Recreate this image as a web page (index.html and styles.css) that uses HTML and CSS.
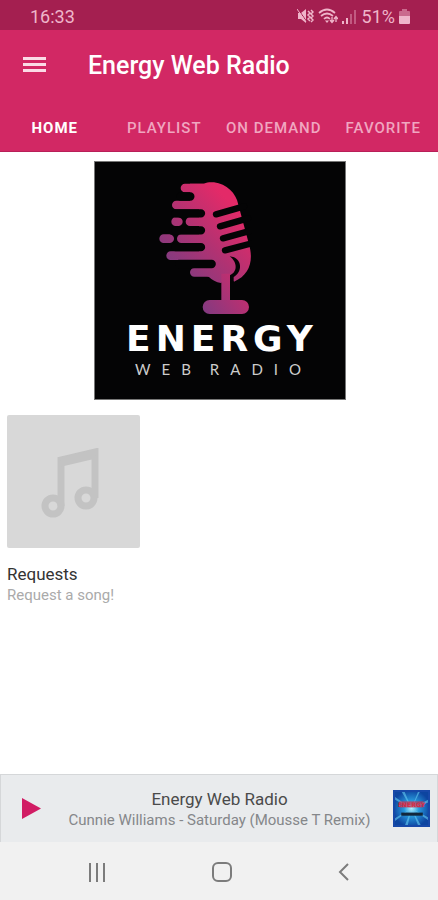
FILE: index.html
```html
<!DOCTYPE html>
<html lang="en">
<head>
  <meta charset="UTF-8">
  <meta name="viewport" content="width=device-width, initial-scale=1.0">
  <title>Energy Web Radio</title>
  <link rel="stylesheet" href="styles.css">
</head>
<body>
  <div class="status">
    <span>16:33</span>
    <div class="status-icons">
      <svg width="17" height="16" viewBox="0 0 17 16" fill="currentColor">
        <path d="M1 5h3l5-4v14l-5-4H1z"/>
        <path d="M1 1l9 13" stroke="#a41f50" stroke-width="1"/>
        <path d="M0 1l9 13" stroke="currentColor" stroke-width="1"/>
        <path d="M11 3l2 2-2 2 2 2-2 2 2 2M14 2l2 2-2 2 2 2-2 2 2 2-2 2" fill="none" stroke="currentColor" stroke-width="1.5"/>
      </svg>
      <svg width="20" height="16" viewBox="0 0 20 16" fill="none" stroke="currentColor" stroke-width="1.7">
        <path d="M1 5q8-7 16 0M3 8q6-5 12 0M6 11q3-3 6 0"/>
        <path d="M7 12.500h4L9 15z" fill="currentColor" stroke="none"/>
        <path d="M14 9v5M12 12l2 2.500 2-2.500M18 14V9M16 11l2-2.500 2 2.500" stroke-width="1.300"/>
      </svg>
      <svg width="14" height="15" viewBox="0 0 14 15" fill="currentColor">
        <path d="M0 12h2v3H0zM4 9h2v6H4z"/>
        <path d="M8 5h2v10H8zM12 1h2v14h-2z" opacity=".4"/>
      </svg>
      <span class="battery-level">51%</span>
      <svg width="11" height="15" viewBox="0 0 11 15" fill="currentColor">
        <path d="M3 0h5v2h2q1 0 1 1v4H0V3q0-1 1-1h2z" opacity=".5"/>
        <path d="M0 7h11v7q0 1-1 1H1q-1 0-1-1z"/>
      </svg>
    </div>
  </div>

  <header>
    <div class="toolbar">
      <button class="menu" aria-label="Menu">
        <svg width="23" height="16" viewBox="0 0 23 16" fill="currentColor">
          <path d="M0 0h23v3H0zM0 6h23v3H0zM0 12h23v3H0z"/>
        </svg>
      </button>
      <h1>Energy Web Radio</h1>
    </div>
    <nav class="tabs">
      <a class="active" href="#home">HOME</a>
      <a href="#playlist">PLAYLIST</a>
      <a href="#demand">ON DEMAND</a>
      <a href="#favorite">FAVORITE</a>
    </nav>
  </header>

  <main>
    <section class="banner">
      <svg class="mic" width="93" height="133" viewBox="30 20 279 399">
        <defs>
          <linearGradient id="mic" gradientUnits="userSpaceOnUse" x1="270" y1="110" x2="80" y2="290">
            <stop offset="0" stop-color="#e32a68"/>
            <stop offset=".5" stop-color="#b23272"/>
            <stop offset="1" stop-color="#823b80"/>
          </linearGradient>
          <linearGradient id="stand" gradientUnits="userSpaceOnUse" x1="300" y1="300" x2="160" y2="400">
            <stop offset="0" stop-color="#d32b6a"/>
            <stop offset="1" stop-color="#843a80"/>
          </linearGradient>
        </defs>
        <!-- body -->
        <path fill="url(#mic)" d="M123 25h42c10-5 20-5 30-4 38 5 66 32 73 67l32 119c14 48 3 92-45 112l-12-14-27 18c-15-3-27-9-37-19l-29-13V102h-27z"/>
        <g stroke="url(#mic)" stroke-width="26" stroke-linecap="round" fill="none">
          <path d="M108 38h60l1 .1M82 89h90l1 .1M80 139h7l1 .1M123 139h50l1 .1M44 190h17l1 .1M97 190h70l1 .1M65 241h120l1 .1M136 291h50l1 .1"/>
        </g>
        <!-- gaps on both sides -->
        <g stroke="#040405" stroke-width="25" stroke-linecap="round" fill="none">
          <path d="M95 63.500h29M80 114h76M80 165h76M80 215.500h76M90 266h98"/>
          <path stroke-width="19" d="M201 117l84-24M213 153l84-24M222 189l84-23M228 225l84-22"/>
        </g>
        <path fill="url(#stand)" d="M217 295h26v79h36a21 21 0 0 1 0 42h-97a21 21 0 0 1 0-42h35z"/>
        <path fill="#040405" d="M242 243c40 4 39 49 12 62v17h-11v-22c21-9 25-37-1-57z"/>
      </svg>
      <h2>ENERGY</h2>
      <p><span>WEB</span> <span>RADIO</span></p>
    </section>

    <section class="list">
      <a class="card" href="#requests">
        <span class="cover">
          <svg width="60" height="72" viewBox="0 0 60 72" fill="none" stroke="#c3c3c3" stroke-width="7">
            <circle cx="12" cy="58" r="8"/>
            <circle cx="45" cy="50" r="8"/>
            <path d="M20 58V12l34-8v46"/>
            <path d="M20 14l34-8" stroke-width="9"/>
          </svg>
        </span>
        <span class="title">Requests</span>
        <span class="text">Request a song!</span>
      </a>
    </section>
  </main>

  <footer>
    <div class="player">
      <button class="play" aria-label="Play">
        <svg width="19" height="21" viewBox="0 0 19 21"><path d="M0 0l19 10.500L0 21z" fill="#d11c64"/></svg>
      </button>
      <div class="track">
        <span class="station">Energy Web Radio</span>
        <span class="song">Cunnie Williams - Saturday (Mousse T Remix)</span>
      </div>
      <div class="art">
        <svg width="37" height="37" viewBox="0 0 36 36">
          <defs>
            <radialGradient id="glow">
              <stop offset="0" stop-color="#b9f3ff"/>
              <stop offset=".4" stop-color="#2899dc"/>
              <stop offset="1" stop-color="#0d45a0"/>
            </radialGradient>
          </defs>
          <path fill="url(#glow)" d="M0 0h36v36H0z"/>
          <path fill="#66cdf2" opacity=".6" d="M18 18L8 1h3zM18 18L25 0h2zM18 18L1 6v3zM18 18l17-9v3zM18 18L1 28v3zM18 18l-7 18h3zM18 18l7 18h3zM18 18l17 9v3z"/>
          <path fill="none" stroke="#1748a8" stroke-width="2" d="M1 1h34v34H1z"/>
          <path fill="#d52b45" opacity=".6" d="M6 11h24l-1 6H7z"/>
          <text class="art-name" x="18" y="17" text-anchor="middle">ENERGY</text>
          <path fill="#12283c" d="M8 22h21v3H8z"/>
        </svg>
      </div>
    </div>
    <div class="system">
      <button aria-label="Recent apps">
        <svg width="18" height="19" viewBox="0 0 18 19" fill="none" stroke="currentColor" stroke-width="2"><path d="M2 0v19M9 0v19M16 0v19"/></svg>
      </button>
      <button aria-label="Home">
        <svg width="20" height="20" viewBox="0 0 20 20" fill="none" stroke="currentColor" stroke-width="2"><rect x="1" y="1" width="18" height="18" rx="5"/></svg>
      </button>
      <button aria-label="Back">
        <svg width="11" height="18" viewBox="0 0 11 18" fill="none" stroke="currentColor" stroke-width="2"><path d="M10 1L2 9l8 8"/></svg>
      </button>
    </div>
  </footer>
</body>
</html>
```
FILE: styles.css
```css
* {
  box-sizing: border-box;
}

body {
  display: flex;
  flex-direction: column;
  min-height: 100vh;
  margin: 0;
  background: #fff;
  font-family: Roboto, sans-serif;
}

h1, h2, p {
  margin: 0;
}

a {
  color: inherit;
  text-decoration: none;
}

button {
  display: flex;
  align-items: center;
  justify-content: center;
  padding: 0;
  border: 0;
  background: none;
  color: inherit;
}

.status {
  display: flex;
  align-items: center;
  justify-content: space-between;
  height: 30px;
  padding: 2px 28px 0 30px;
  background: #a41f50;
  color: #efb5ca;
  font-size: 18px;
}

.status-icons {
  display: flex;
  align-items: center;
  gap: 4px;
}

.battery-level {
  padding-left: 2px;
}

header {
  background: #d22864;
  color: #fff;
}

.toolbar {
  display: flex;
  align-items: center;
  gap: 42px;
  height: 70px;
  padding: 0 23px;
}

.menu {
  color: #fbdbe6;
}

h1 {
  font-size: 25px;
  font-weight: 500;
}

.tabs {
  display: grid;
  grid-template-columns: repeat(4, 1fr);
  height: 52px;
  border-bottom: 1px solid #b81f58;
}

.tabs a {
  display: flex;
  align-items: center;
  justify-content: center;
  padding-top: 4px;
  color: #f0a6c0;
  font-size: 15px;
  font-weight: 500;
  letter-spacing: 1px;
  white-space: nowrap;
}

.tabs .active {
  color: #fff;
  font-weight: 700;
}

main {
  flex: 1;
  padding: 9px 6px 9px 7px;
}

.banner {
  display: flex;
  flex-direction: column;
  align-items: center;
  width: 252px;
  margin: 0 auto 15px;
  padding: 20px 0;
  border: 1px solid #777;
  background: #040405;
  color: #fff;
}

.mic {
  margin-right: 28px;
}

.banner h2 {
  padding: 4px 0 0 5px;
  font: bold 36px/40px "DejaVu Sans", sans-serif;
  letter-spacing: 5px;
}

.banner p {
  display: flex;
  gap: 8px;
  padding-left: 8px;
  color: #ccc;
  font: 15px/20px Lato, sans-serif;
  letter-spacing: 11px;
}

.card {
  display: flex;
  flex-direction: column;
  width: 133px;
}

.cover {
  display: flex;
  align-items: center;
  justify-content: center;
  aspect-ratio: 1;
  margin-bottom: 16px;
  padding: 4px 6px 0 0;
  border-radius: 2px;
  background: #d8d8d8;
}

.title {
  color: #333;
  font-size: 17px;
  line-height: 20px;
}

.text {
  color: #aaa;
  font-size: 15px;
  line-height: 22px;
}

.player {
  display: flex;
  align-items: center;
  height: 68px;
  padding: 0 7px 0 21px;
  border: 1px solid #d5d7d9;
  border-bottom: 0;
  background: #e9ebed;
}

.track {
  flex: 1;
  display: flex;
  flex-direction: column;
  padding-left: 5px;
  text-align: center;
}

.station {
  color: #4a4a4a;
  font-size: 17px;
  line-height: 22px;
}

.song {
  color: #85878a;
  font-size: 15px;
  line-height: 20px;
}

.art {
  display: flex;
}

.art-name {
  fill: #d52b45;
  font: bold 6px "DejaVu Sans", sans-serif;
}

.system {
  display: flex;
  align-items: center;
  justify-content: space-between;
  height: 58px;
  padding: 2px 89px 0 88px;
  background: #f1f1f1;
  color: #7c7c7c;
}
```
